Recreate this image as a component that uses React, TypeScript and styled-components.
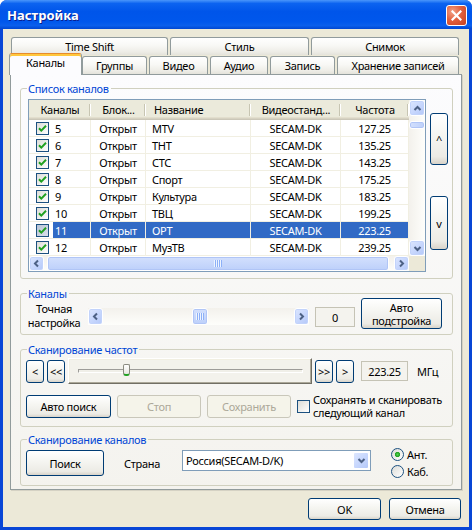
import React from "react";
import styled, { createGlobalStyle, css } from "styled-components";

const UI_FONT = `Tahoma, "Noto Sans", "DejaVu Sans", sans-serif`;

const GlobalStyle = createGlobalStyle`
  *, *::before, *::after {
    box-sizing: border-box;
  }
  html, body {
    margin: 0;
    padding: 0;
    background: #ffffff;
  }
  body {
    font-family: ${UI_FONT};
    font-size: 11px;
    letter-spacing: -0.3px;
    color: #000;
  }
`;

interface Channel {
  num: number;
  name: string;
  freq: string;
  selected?: boolean;
}

const channels: Channel[] = [
  { num: 5, name: "MTV", freq: "127.25" },
  { num: 6, name: "ТНТ", freq: "135.25" },
  { num: 7, name: "СТС", freq: "143.25" },
  { num: 8, name: "Спорт", freq: "175.25" },
  { num: 9, name: "Культура", freq: "183.25" },
  { num: 10, name: "ТВЦ", freq: "199.25" },
  { num: 11, name: "ОРТ", freq: "223.25", selected: true },
  { num: 12, name: "МузТВ", freq: "239.25" },
];

const backTabs = [
  { label: "Time Shift", w: 157 },
  { label: "Стиль", w: 139 },
  { label: "Снимок", w: 148 },
];

const frontTabs = [
  { label: "Каналы", w: 73, active: true },
  { label: "Группы", w: 65 },
  { label: "Видео", w: 59 },
  { label: "Аудио", w: 58 },
  { label: "Запись", w: 65 },
  { label: "Хранение записей", w: 122 },
];

type Dir = "up" | "down" | "left" | "right";

const Chevron = ({ dir }: { dir: Dir }) => {
  const pts = {
    up: "1.5,6 4.5,3 7.5,6",
    down: "1.5,3 4.5,6 7.5,3",
    left: "6,1.5 3,4.5 6,7.5",
    right: "3,1.5 6,4.5 3,7.5",
  }[dir];
  return (
    <svg width="9" height="9" viewBox="0 0 9 9">
      <polyline points={pts} fill="none" stroke="#4D6185" strokeWidth="2" />
    </svg>
  );
};

const ScrollBar = ({
  vertical,
  pos,
  size,
}: {
  vertical?: boolean;
  pos: number;
  size: number;
}) => (
  <Bar $v={vertical}>
    <ArrowBtn $v={vertical}>
      <Chevron dir={vertical ? "up" : "left"} />
    </ArrowBtn>
    <Track $v={vertical}>
      <Thumb
        $v={vertical}
        style={
          vertical
            ? { marginTop: pos, height: size }
            : { marginLeft: pos, width: size }
        }
      >
        {size > 12 && <Grip $v={vertical} />}
      </Thumb>
    </Track>
    <ArrowBtn $v={vertical}>
      <Chevron dir={vertical ? "down" : "right"} />
    </ArrowBtn>
  </Bar>
);

const App = () => {
  const sliderValue = 0.21;

  return (
    <>
      <GlobalStyle />
      <Window>
        <TitleBar>
          <TitleText>Настройка</TitleText>
          <CloseButton>
            <svg width="11" height="11" viewBox="0 0 11 11">
              <path
                d="M1.5 1.5 L9.5 9.5 M9.5 1.5 L1.5 9.5"
                stroke="#fff"
                strokeWidth="2.2"
                strokeLinecap="square"
              />
            </svg>
          </CloseButton>
        </TitleBar>

        <Body>
          <TabRow>
            {backTabs.map((t) => (
              <Tab key={t.label} $w={t.w}>
                {t.label}
              </Tab>
            ))}
          </TabRow>
          <TabRow $front>
            {frontTabs.map((t) => (
              <Tab key={t.label} $w={t.w} $active={t.active}>
                {t.label}
              </Tab>
            ))}
          </TabRow>

          <Panel>
            <Group $h={197}>
              <Legend>Список каналов</Legend>
              <ListRow>
                <ListView>
                  <ListBody>
                    <HeaderRow>
                      <HeaderCell>Каналы</HeaderCell>
                      <HeaderCell>Блок...</HeaderCell>
                      <HeaderCell $left>Название</HeaderCell>
                      <HeaderCell>Видеостанд...</HeaderCell>
                      <HeaderCell>Частота</HeaderCell>
                    </HeaderRow>
                    {channels.map((c) => (
                      <DataRow key={c.num}>
                        <Cell>
                          <ListCheck $dim={c.selected}>
                            <CheckMark />
                          </ListCheck>
                          <NumLabel $sel={c.selected}>{c.num}</NumLabel>
                        </Cell>
                        <Cell $center $sel={c.selected}>
                          Открыт
                        </Cell>
                        <Cell $sel={c.selected}>{c.name}</Cell>
                        <Cell $center $sel={c.selected}>
                          SECAM-DK
                        </Cell>
                        <Cell $center $sel={c.selected}>
                          {c.freq}
                        </Cell>
                      </DataRow>
                    ))}
                  </ListBody>
                  <ScrollBar vertical pos={5} size={8} />
                  <ScrollBar pos={3} size={342} />
                  <Corner />
                </ListView>
                <SideButtons>
                  <Button $w={18} $h={52}>
                    ^
                  </Button>
                  <Button $w={18} $h={54}>
                    v
                  </Button>
                </SideButtons>
              </ListRow>
            </Group>

            <Group $h={48}>
              <Legend>Каналы</Legend>
              <FineRow>
                <FineLabel>
                  Точная
                  <br />
                  настройка
                </FineLabel>
                <FineScroll>
                  <ScrollBar pos={89} size={16} />
                </FineScroll>
                <ValueBox $w={40} $mt={9}>
                  0
                </ValueBox>
                <Button $w={81} $h={31}>
                  Авто
                  <br />
                  подстройка
                </Button>
              </FineRow>
            </Group>

            <Group $h={84}>
              <Legend>Сканирование частот</Legend>
              <FreqRow>
                <Button $w={18} $h={23}>
                  &lt;
                </Button>
                <Button $w={18} $h={23}>
                  &lt;&lt;
                </Button>
                <SliderBox>
                  <SliderTrack>
                    <SliderThumb style={{ left: `${sliderValue * 100}%` }} />
                  </SliderTrack>
                </SliderBox>
                <Button $w={18} $h={23}>
                  &gt;&gt;
                </Button>
                <Button $w={18} $h={23}>
                  &gt;
                </Button>
                <ValueBox $w={47} $ml={4}>
                  223.25
                </ValueBox>
                <Unit>МГц</Unit>
              </FreqRow>
              <ActionRow>
                <Button $w={85} $h={23}>
                  Авто поиск
                </Button>
                <Button $w={84} $h={23} disabled>
                  Стоп
                </Button>
                <Button $w={84} $h={23} disabled>
                  Сохранить
                </Button>
                <CheckOption>
                  <PlainCheck />
                  <CheckText>
                    Сохранять и сканировать
                    <br />
                    следующий канал
                  </CheckText>
                </CheckOption>
              </ActionRow>
            </Group>

            <Group $h={53} $mt={-2}>
              <Legend>Сканирование каналов</Legend>
              <ScanRow>
                <Button $w={78} $h={26}>
                  Поиск
                </Button>
                <CountryLabel>Страна</CountryLabel>
                <Combo>
                  <ComboText>Россия(SECAM-D/K)</ComboText>
                  <ComboBtn>
                    <Chevron dir="down" />
                  </ComboBtn>
                </Combo>
                <RadioGroup>
                  <RadioOption>
                    <RadioCircle $on />
                    Ант.
                  </RadioOption>
                  <RadioOption>
                    <RadioCircle />
                    Каб.
                  </RadioOption>
                </RadioGroup>
              </ScanRow>
            </Group>
          </Panel>

          <DialogButtons>
            <Button $w={73} $h={22}>
              OK
            </Button>
            <Button $w={72} $h={22}>
              Отмена
            </Button>
          </DialogButtons>
        </Body>
      </Window>
    </>
  );
};

export default App;

const CheckMark = () => (
  <svg width="11" height="11" viewBox="0 0 11 11">
    <polyline
      points="2,5.2 4.3,7.6 9,2.8"
      fill="none"
      stroke="#21A121"
      strokeWidth="2"
    />
  </svg>
);

const Window = styled.div`
  width: 472px;
  height: 530px;
  display: flex;
  flex-direction: column;
  background: #0846d6;
  border-radius: 7px 7px 0 0;
  overflow: hidden;
`;

const TitleBar = styled.div`
  flex: none;
  height: 29px;
  display: flex;
  align-items: center;
  justify-content: space-between;
  padding: 1px 5px 0 7px;
  background: linear-gradient(
    180deg,
    #4a96fb 0%,
    #0c63f0 12%,
    #0055ea 40%,
    #0057ec 75%,
    #0a5fec 88%,
    #0047d2 100%
  );
`;

const TitleText = styled.div`
  font-family: "Noto Sans", "DejaVu Sans", sans-serif;
  font-weight: bold;
  font-size: 13px;
  letter-spacing: 0;
  color: #ffffff;
  text-shadow: 1px 1px 0 #0a1f8f;
`;

const CloseButton = styled.div`
  width: 21px;
  height: 21px;
  border: 1px solid #ffffff;
  border-radius: 3px;
  background: radial-gradient(
    circle at 30% 30%,
    #f2a287 0%,
    #e2603e 45%,
    #c6401e 100%
  );
  display: flex;
  align-items: center;
  justify-content: center;
`;

const Body = styled.div`
  flex: 1;
  margin: 0 3px 3px;
  background: #ece9d8;
  padding: 9px 7px 0 7px;
  display: flex;
  flex-direction: column;
`;

const TabRow = styled.div<{ $front?: boolean }>`
  display: flex;
  align-items: flex-end;
  gap: 2px;
  height: 18px;
  margin-left: 1px;

  ${(p) =>
    p.$front &&
    css`
      height: 22px;
      margin: -3px 0 -1px -1px;
      position: relative;
      z-index: 1;
    `}
`;

const Tab = styled.div<{ $w: number; $active?: boolean }>`
  flex: none;
  width: ${(p) => p.$w}px;
  height: 18px;
  display: flex;
  align-items: center;
  justify-content: center;
  border: 1px solid #919b9c;
  border-bottom: none;
  border-radius: 3px 3px 0 0;
  background: linear-gradient(
    180deg,
    #ffffff 0%,
    #f8f8f5 45%,
    #eeede7 80%,
    #e4e3db 100%
  );
  white-space: nowrap;
  margin-bottom: 1px;

  ${(p) =>
    p.$active &&
    css`
      height: 22px;
      margin: 0 -2px 0 0;
      border-top: 1px solid #e68b2c;
      box-shadow: inset 0 2px 0 #ffc73c;
      background: #fcfcfe;
      padding: 2px 0 6px;
    `}
`;

const Panel = styled.div`
  flex: none;
  height: 416px;
  border: 1px solid #919b9c;
  box-shadow: 1px 1px 0 #d5d2c4;
  background: linear-gradient(180deg, #fcfcfe 0%, #f4f3ee 100%);
  padding: 7px 8px 0 9px;
  display: flex;
  flex-direction: column;
  gap: 8px;
`;

const Group = styled.fieldset<{ $h: number; $mt?: number }>`
  flex: none;
  height: ${(p) => p.$h}px;
  margin: ${(p) => p.$mt ?? 0}px 0 0;
  min-width: 0;
  padding: 0 3px 0 5px;
  border: 1px solid #d0d0bf;
  border-radius: 3px;
`;

const Legend = styled.legend`
  margin-left: 1px;
  padding: 0 2px 0 1px;
  color: #0046d5;
  line-height: 13px;
`;

const ListRow = styled.div`
  display: flex;
  align-items: flex-start;
  gap: 4px;
  margin: 4px 0 0 2px;
`;

const ListView = styled.div`
  flex: none;
  width: 398px;
  height: 173px;
  border: 1px solid #7f9db9;
  background: #ffffff;
  display: grid;
  grid-template-columns: 380px 16px;
  grid-template-rows: 156px 15px;
`;

const ListBody = styled.div`
  overflow: hidden;
`;

const COLUMNS = "62px 55px 105px 90px 68px";

const HeaderRow = styled.div`
  display: grid;
  grid-template-columns: ${COLUMNS};
  height: 20px;
  background: #ebeadb;
  box-shadow: inset 0 -1px 0 #cbc7b8, inset 0 -2px 0 #d6d2c2,
    inset 0 -3px 0 #e2decd;
`;

const HeaderCell = styled.div<{ $left?: boolean }>`
  display: flex;
  align-items: center;
  justify-content: ${(p) => (p.$left ? "flex-start" : "center")};
  padding: 0 0 2px ${(p) => (p.$left ? 8 : 0)}px;
  white-space: nowrap;
  background: linear-gradient(#c7c5b2, #c7c5b2) right 1px top 4px / 1px 12px
      no-repeat,
    linear-gradient(#ffffff, #ffffff) right 0 top 4px / 1px 12px no-repeat;
`;

const DataRow = styled.div`
  display: grid;
  grid-template-columns: ${COLUMNS};
  height: 17px;
`;

const Cell = styled.div<{ $center?: boolean; $sel?: boolean }>`
  display: flex;
  align-items: center;
  justify-content: ${(p) => (p.$center ? "center" : "flex-start")};
  padding-left: ${(p) => (p.$center ? 0 : 6)}px;
  border-right: 1px solid #f1efe2;
  border-bottom: 1px solid #f1efe2;
  white-space: nowrap;
  background: ${(p) => (p.$sel ? "#316ac5" : "transparent")};
  color: ${(p) => (p.$sel ? "#ffffff" : "#000000")};

  &:first-child {
    padding-left: 7px;
  }
`;

const ListCheck = styled.span<{ $dim?: boolean }>`
  flex: none;
  width: 13px;
  height: 13px;
  border: 1px solid #1c5180;
  background: ${(p) =>
    p.$dim
      ? "linear-gradient(135deg, #b9c4d6, #d9dfe9)"
      : "linear-gradient(135deg, #dcdcd7, #ffffff)"};
  display: flex;
  align-items: center;
  justify-content: center;
  margin-right: 4px;
`;

const NumLabel = styled.span<{ $sel?: boolean }>`
  flex: 1;
  align-self: stretch;
  display: flex;
  align-items: center;
  padding-left: 2px;
  background: ${(p) => (p.$sel ? "#316ac5" : "transparent")};
  color: ${(p) => (p.$sel ? "#ffffff" : "#000000")};
`;

const Bar = styled.div<{ $v?: boolean }>`
  display: flex;
  flex-direction: ${(p) => (p.$v ? "column" : "row")};
  background: ${(p) =>
    p.$v
      ? "linear-gradient(90deg, #f3f1ec, #fefefb)"
      : "linear-gradient(180deg, #f3f1ec, #fefefb)"};
`;

const ArrowBtn = styled.div<{ $v?: boolean }>`
  flex: none;
  ${(p) => (p.$v ? "height: 16px;" : "width: 15px;")}
  border: 1px solid #ffffff;
  border-radius: 3px;
  background: linear-gradient(135deg, #dce6fe 0%, #c6d6fd 55%, #b4c8f8 100%);
  box-shadow: inset 0 0 0 1px #c2d3fb;
  display: flex;
  align-items: center;
  justify-content: center;
`;

const Track = styled.div<{ $v?: boolean }>`
  flex: 1;
  display: flex;
  flex-direction: ${(p) => (p.$v ? "column" : "row")};
  align-items: stretch;
`;

const Thumb = styled.div<{ $v?: boolean }>`
  flex: none;
  border: 1px solid #ffffff;
  border-radius: 3px;
  background: linear-gradient(
    ${(p) => (p.$v ? "90deg" : "180deg")},
    #d3e0fd,
    #bdd0fa
  );
  box-shadow: inset 0 0 0 1px #b0c5f6;
  display: flex;
  align-items: center;
  justify-content: center;
`;

const Grip = styled.div<{ $v?: boolean }>`
  width: ${(p) => (p.$v ? 7 : 8)}px;
  height: ${(p) => (p.$v ? 8 : 7)}px;
  background: repeating-linear-gradient(
    ${(p) => (p.$v ? "180deg" : "90deg")},
    #eef4fe 0 1px,
    #8cb0f8 1px 2px
  );
`;

const Corner = styled.div`
  background: #ece9d8;
`;

const SideButtons = styled.div`
  display: flex;
  flex-direction: column;
  gap: 31px;
  margin-top: 14px;
`;

const Button = styled.button<{ $w: number; $h: number }>`
  flex: none;
  width: ${(p) => p.$w}px;
  height: ${(p) => p.$h}px;
  padding: 0;
  font: inherit;
  letter-spacing: inherit;
  line-height: 13px;
  color: #000000;
  border: 1px solid #003c74;
  border-radius: 3px;
  background: linear-gradient(
    180deg,
    #ffffff 0%,
    #f6f6f2 40%,
    #ecebe5 85%,
    #d8d3c9 100%
  );
  white-space: nowrap;

  &:disabled {
    border-color: #c9c7ba;
    background: #f5f4ea;
    color: #aca899;
  }
`;

const FineRow = styled.div`
  display: flex;
  align-items: flex-start;
  gap: 6px;
  margin-top: -2px;
`;

const FineLabel = styled.div`
  width: 56px;
  margin-top: 4px;
  text-align: center;
  line-height: 14px;
`;

const FineScroll = styled.div`
  width: 221px;
  height: 17px;
  margin-top: 10px;
  display: flex;
  flex-direction: column;

  & > div {
    flex: 1;
  }
`;

const ValueBox = styled.div<{ $w: number; $mt?: number; $ml?: number }>`
  flex: none;
  width: ${(p) => p.$w}px;
  height: 20px;
  margin: ${(p) => p.$mt ?? 0}px 0 0 ${(p) => p.$ml ?? 0}px;
  border: 1px solid #c5c3b5;
  background: #f4f3ee;
  display: flex;
  align-items: center;
  justify-content: center;
`;

const FreqRow = styled.div`
  display: flex;
  align-items: center;
  gap: 3px;
  margin: 2px 0 0;
`;

const SliderBox = styled.div`
  flex: none;
  width: 244px;
  height: 26px;
  border: 1px solid;
  border-color: #ffffff #716f64 #716f64 #ffffff;
  box-shadow: inset -1px -1px 0 #aca899, inset 1px 1px 0 #f1efe2;
  background: #f3f2ec;
  padding: 0 8px 0 9px;
  display: flex;
  align-items: center;
`;

const SliderTrack = styled.div`
  position: relative;
  flex: 1;
  height: 4px;
  border: 1px solid;
  border-color: #9d9c99 #ffffff #ffffff #9d9c99;
  background: #f0efe8;
`;

const SliderThumb = styled.div`
  position: absolute;
  top: -6px;
  width: 7px;
  height: 12px;
  margin-left: -3px;
  border: 1px solid #8a8a80;
  border-bottom: 2px solid #21a121;
  border-radius: 2px 2px 3px 3px;
  background: linear-gradient(180deg, #ffffff, #e8e7e0);
`;

const Unit = styled.span`
  margin-left: 6px;
`;

const ActionRow = styled.div`
  display: flex;
  align-items: center;
  gap: 6px;
  margin-top: 9px;
`;

const CheckOption = styled.div`
  display: flex;
  align-items: center;
  gap: 3px;
`;

const PlainCheck = styled.span`
  flex: none;
  width: 13px;
  height: 13px;
  border: 1px solid #1c5180;
  background: linear-gradient(135deg, #dcdcd7, #ffffff);
`;

const CheckText = styled.span`
  line-height: 13px;
  white-space: nowrap;
`;

const ScanRow = styled.div`
  display: flex;
  align-items: center;
  gap: 20px;
  margin-top: 2px;
`;

const CountryLabel = styled.span`
  width: 38px;
`;

const Combo = styled.div`
  flex: none;
  width: 189px;
  height: 21px;
  margin-bottom: 5px;
  border: 1px solid #7f9db9;
  background: #ffffff;
  padding: 1px;
  display: flex;
  align-items: center;
`;

const ComboText = styled.span`
  flex: 1;
  padding-left: 2px;
`;

const ComboBtn = styled.span`
  width: 16px;
  height: 17px;
  border: 1px solid #ffffff;
  border-radius: 2px;
  background: linear-gradient(135deg, #dce6fe 0%, #c6d6fd 55%, #b4c8f8 100%);
  display: flex;
  align-items: center;
  justify-content: center;
`;

const RadioGroup = styled.div`
  display: flex;
  flex-direction: column;
  gap: 4px;
`;

const RadioOption = styled.label`
  display: flex;
  align-items: center;
  gap: 3px;
  line-height: 13px;
`;

const RadioCircle = styled.span<{ $on?: boolean }>`
  width: 13px;
  height: 13px;
  border-radius: 50%;
  border: 1px solid #1c5180;
  background: ${(p) =>
    p.$on
      ? "radial-gradient(circle, #55d454 0, #21a121 2.2px, transparent 3px), linear-gradient(135deg, #dcdcd7, #ffffff)"
      : "linear-gradient(135deg, #dcdcd7, #ffffff)"};
`;

const DialogButtons = styled.div`
  display: flex;
  justify-content: flex-end;
  gap: 8px;
  margin: 8px 1px 0 0;
`;
